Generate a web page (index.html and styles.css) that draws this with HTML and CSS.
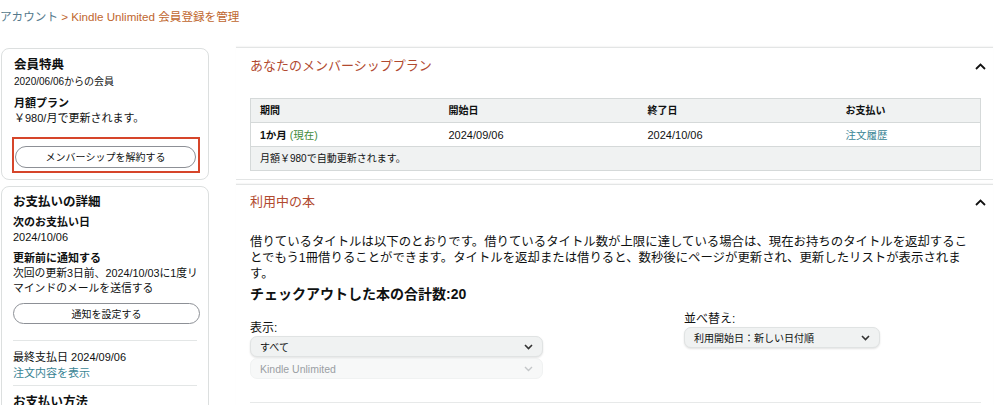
FILE: index.html
```html
<!DOCTYPE html>
<html lang="ja">
<head>
    <meta charset="UTF-8">
    <title>Kindle Unlimited 会員登録を管理</title>
    <link rel="stylesheet" href="styles.css">
</head>
<body>
    <div class="breadcrumb">
        <a href="#" class="crumb-link">アカウント</a>
        <span class="crumb-current">&gt; Kindle Unlimited 会員登録を管理</span>
    </div>

    <div class="layout">
        <!-- left column -->
        <div class="side">
            <div class="card">
                <h3 class="card-title">会員特典</h3>
                <div class="since">2020/06/06からの会員</div>
                <div class="label plan-label">月額プラン</div>
                <div class="text">￥980/月で更新されます。</div>
                <div class="highlight">
                    <button class="pill">メンバーシップを解約する</button>
                </div>
            </div>

            <div class="card card-pay">
                <h3 class="card-title">お支払いの詳細</h3>
                <div class="label next-label">次のお支払い日</div>
                <div class="text">2024/10/06</div>
                <div class="label notify-label">更新前に通知する</div>
                <div class="text remind">次回の更新3日前、2024/10/03に1度リマインドのメールを送信する</div>
                <button class="pill pill-notify">通知を設定する</button>
                <hr class="divider">
                <div class="text last-paid">最終支払日 2024/09/06</div>
                <a href="#" class="link">注文内容を表示</a>
                <hr class="divider divider-tight">
                <h3 class="card-title method">お支払い方法</h3>
            </div>
        </div>

        <!-- right column -->
        <div class="main">
            <div class="section">
                <div class="section-head">
                    <h2 class="section-title">あなたのメンバーシッププラン</h2>
                    <svg class="chevron" width="11" height="7" viewBox="0 0 11 7"><path d="M1 6 L5.5 1.5 L10 6" fill="none" stroke="#111" stroke-width="1.8"/></svg>
                </div>
                <table class="plan-table">
                    <colgroup>
                        <col style="width:189px">
                        <col style="width:199px">
                        <col style="width:198px">
                        <col>
                    </colgroup>
                    <tr class="head-row">
                        <th>期間</th>
                        <th>開始日</th>
                        <th>終了日</th>
                        <th>お支払い</th>
                    </tr>
                    <tr>
                        <td><b>1か月</b> <span class="current">(現在)</span></td>
                        <td class="num">2024/09/06</td>
                        <td class="num">2024/10/06</td>
                        <td><a href="#" class="link">注文履歴</a></td>
                    </tr>
                    <tr class="note-row">
                        <td colspan="4">月額￥980で自動更新されます。</td>
                    </tr>
                </table>
            </div>

            <div class="section section-books">
                <div class="section-head">
                    <h2 class="section-title">利用中の本</h2>
                    <svg class="chevron" width="11" height="7" viewBox="0 0 11 7"><path d="M1 6 L5.5 1.5 L10 6" fill="none" stroke="#111" stroke-width="1.8"/></svg>
                </div>
                <p class="intro">借りているタイトルは以下のとおりです。借りているタイトル数が上限に達している場合は、現在お持ちのタイトルを返却することでもう1冊借りることができます。タイトルを返却または借りると、数秒後にページが更新され、更新したリストが表示されます。</p>
                <div class="total">チェックアウトした本の合計数:20</div>

                <div class="controls">
                    <div class="filter">
                        <div class="ctl-label">表示:</div>
                        <div class="select">
                            <span>すべて</span>
                            <svg width="9" height="6" viewBox="0 0 9 6"><path d="M1 1 L4.5 4.5 L8 1" fill="none" stroke="#333" stroke-width="1.6"/></svg>
                        </div>
                        <div class="select select-disabled">
                            <span>Kindle Unlimited</span>
                            <svg width="9" height="6" viewBox="0 0 9 6"><path d="M1 1 L4.5 4.5 L8 1" fill="none" stroke="#c4c7c9" stroke-width="1.4"/></svg>
                        </div>
                    </div>
                    <div class="sort">
                        <div class="ctl-label">並べ替え:</div>
                        <div class="select">
                            <span>利用開始日：新しい日付順</span>
                            <svg width="9" height="6" viewBox="0 0 9 6"><path d="M1 1 L4.5 4.5 L8 1" fill="none" stroke="#333" stroke-width="1.6"/></svg>
                        </div>
                    </div>
                </div>
                <div class="list-line"></div>
            </div>
        </div>
    </div>
</body>
</html>
```

FILE: styles.css
```css
body {
    margin: 0;
    font-family: "Liberation Sans", "Noto Sans CJK JP", sans-serif;
    color: #0f1111;
    background: #fff;
    overflow: hidden;
}

a {
    text-decoration: none;
}

.breadcrumb {
    height: 47px;
    padding-top: 9px;
    box-sizing: border-box;
    font-size: 11.6px;
    line-height: 16px;
}

.crumb-link {
    color: #55798c;
}

.crumb-current {
    color: #c0662e;
}

.layout {
    display: flex;
    gap: 27px;
}

/* left column */
.side {
    width: 209px;
    flex: none;
}

.card {
    margin-top: 1px;
    margin-left: 1px;
    border: 1px solid #dcdfdf;
    border-radius: 8px;
    padding: 8px 12px 6px;
}

.card-pay {
    margin-top: 6px;
    padding: 7px 8px 6px 11px;
}

.card-title {
    margin: 0;
    font-size: 12.5px;
    line-height: 16px;
    font-weight: bold;
}

.since {
    margin-top: 2px;
    font-size: 10px;
    line-height: 14px;
}

.label {
    font-size: 11px;
    line-height: 15px;
    font-weight: bold;
}

.plan-label {
    margin-top: 7px;
}

.text {
    font-size: 11px;
    line-height: 15px;
}

.remind {
    font-size: 10.8px;
}

.next-label {
    margin-top: 5px;
}

.notify-label {
    margin-top: 6px;
}

.highlight {
    margin: 11px -4px 0 -2px;
    border: 2px solid #d6452a;
    padding: 7px 2px 3px 1px;
}

.pill {
    display: block;
    width: 100%;
    height: 22px;
    border: 1px solid #8d9096;
    border-radius: 11px;
    background: #fff;
    font-family: "Noto Sans CJK JP", sans-serif;
    font-size: 10px;
    color: #0f1111;
    line-height: 18px;
    padding: 0;
}

.pill-notify {
    margin-top: 7px;
    width: 187px;
    height: 21px;
}

.divider {
    border: none;
    border-top: 1px solid #e3e6e6;
    margin: 16px 3px 8px 0;
}

.divider-tight {
    margin: 4px 3px 8px 0;
}

.last-paid {
    line-height: 16px;
}

.link {
    display: block;
    font-size: 11px;
    line-height: 16px;
    color: #3b8595;
}

.method {
    height: 16px;
}

/* right column */
.main {
    width: 757px;
    flex: none;
}

.section {
    border-top: 1px solid #e3e5e5;
    border-bottom: 1px solid #e3e5e5;
    box-shadow: 0 -1px 1px rgba(0, 0, 0, 0.03);
    padding: 9px 12px 8px 14px;
}

.section-books {
    margin-top: 4px;
    padding-top: 8px;
    border-bottom: none;
}

.section-head {
    display: flex;
    justify-content: space-between;
    align-items: center;
}

.section-title {
    margin: 0;
    font-size: 13px;
    line-height: 18px;
    font-weight: normal;
    color: #b14a30;
}

.chevron {
    margin-right: -5px;
}

.plan-table {
    margin-top: 23px;
    width: 731px;
    table-layout: fixed;
    border-collapse: collapse;
    border: 1px solid #d5d9d9;
    font-size: 10.5px;
}

.plan-table th,
.plan-table td {
    height: 23px;
    padding: 0 9px;
    text-align: left;
    border-bottom: 1px solid #d5d9d9;
    line-height: 14px;
}

.head-row th {
    background: #f0f2f2;
    font-weight: bold;
    font-size: 10px;
}

.num {
    font-size: 11px;
}

.current {
    color: #3f8a3a;
}

.note-row td {
    background: #f0f2f2;
    font-size: 10px;
}

.plan-table .link {
    display: inline;
    font-size: 10.5px;
}

.intro {
    margin: 23px 8px 0 0;
    font-size: 12.4px;
    line-height: 16px;
}

.total {
    margin-top: 3px;
    font-size: 14px;
    line-height: 18px;
    font-weight: bold;
}

.controls {
    margin-top: 8px;
    display: grid;
    grid-template-columns: 434px 196px;
}

.filter {
    padding-top: 9px;
}

.ctl-label {
    font-size: 12px;
    line-height: 16px;
}

.select {
    display: flex;
    align-items: center;
    justify-content: space-between;
    box-sizing: border-box;
    height: 21px;
    padding: 0 9px;
    border: 1px solid #e0e3e3;
    border-radius: 7px;
    background: #f0f2f2;
    box-shadow: 0 1px 2px rgba(15, 17, 17, 0.12);
    font-size: 10px;
    width: 293px;
}

.sort .select {
    width: 196px;
}

.select-disabled {
    margin-top: 1px;
    background: #f7f8f8;
    border-color: #f0f2f2;
    box-shadow: none;
    color: #9a9ea3;
    font-size: 10.5px;
}

.list-line {
    margin-top: 23px;
    border-top: 1px solid #e7e9e9;
}
```
